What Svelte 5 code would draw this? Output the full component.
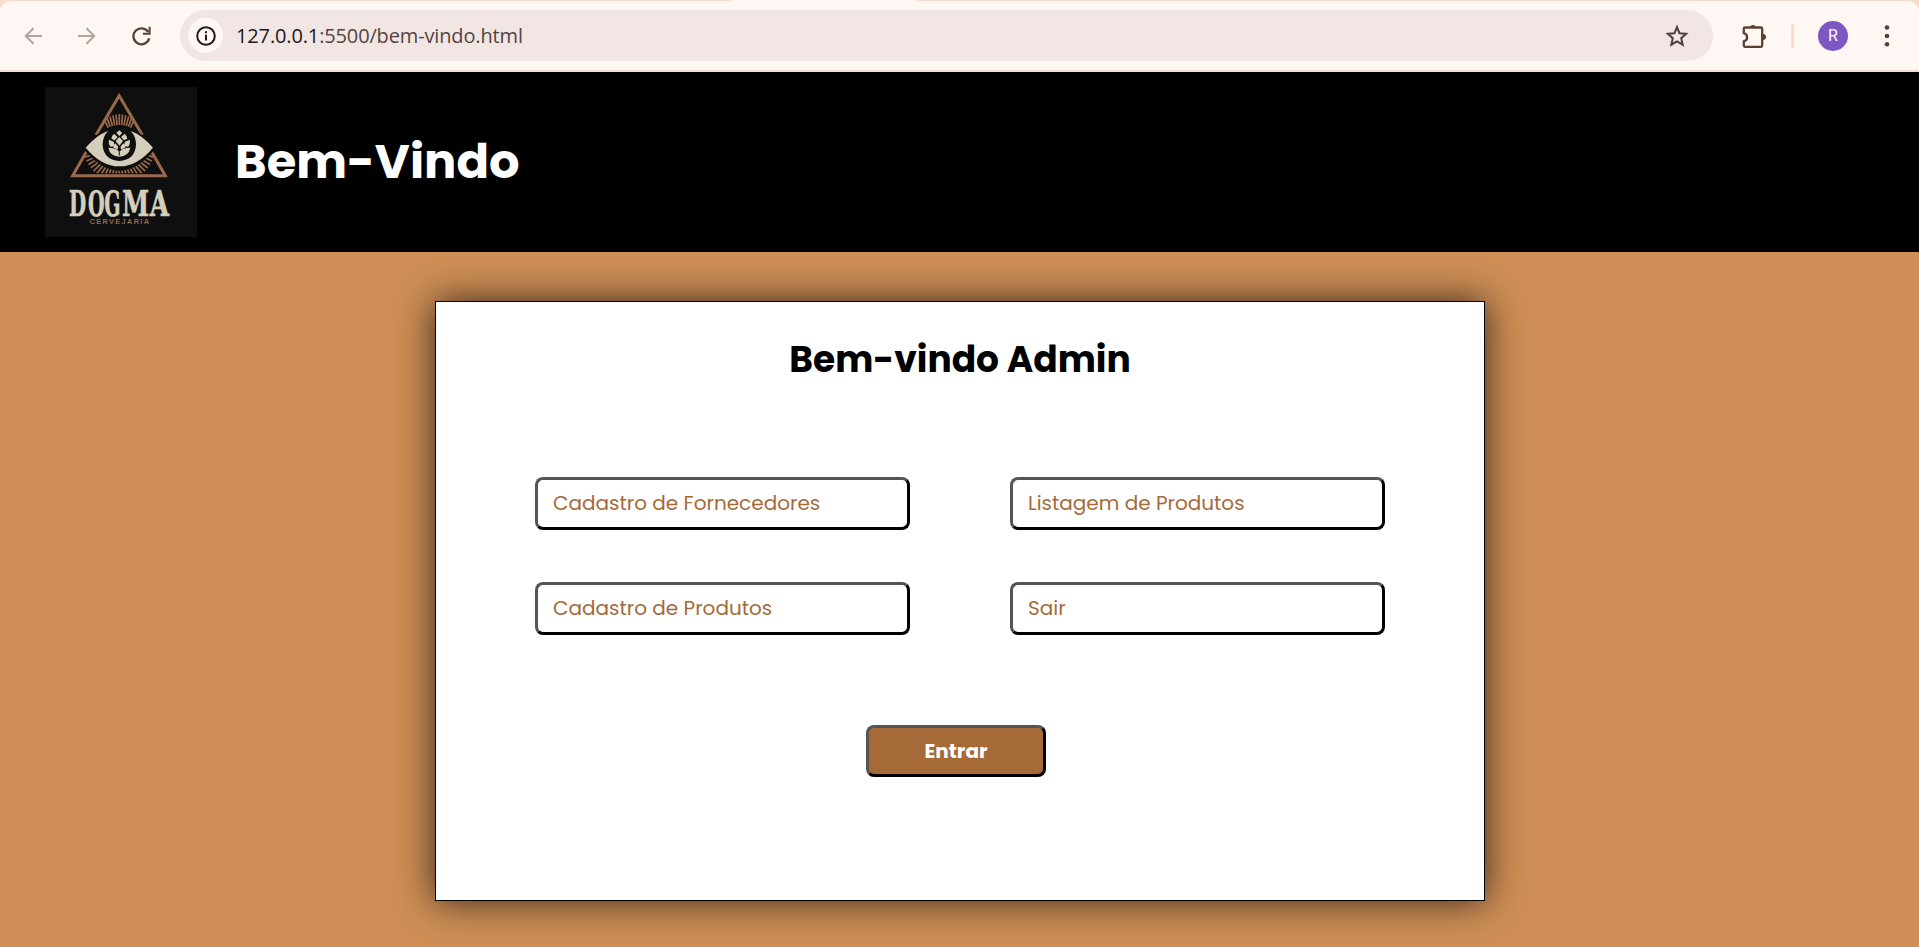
<script>
  const links = ['Cadastro de Fornecedores', 'Listagem de Produtos', 'Cadastro de Produtos', 'Sair'];

  // Rays that surround the eye, as line segments between two radii
  const ray = (deg, cx, cy, r1, r2) => {
    const a = (deg * Math.PI) / 180;
    return {
      x1: cx + Math.cos(a) * r1,
      y1: cy + Math.sin(a) * r1,
      x2: cx + Math.cos(a) * r2,
      y2: cy + Math.sin(a) * r2
    };
  };
  const lower = Array.from({ length: 23 }, (_, i) => {
    const d = 18 + i * 6.55;
    const edge = Math.abs(Math.sin((d * Math.PI) / 180));
    return ray(d, 238, 197, 74 + 18 * (1 - edge), Math.min(108, 82 / edge));
  });
  const upper = Array.from({ length: 11 }, (_, i) => {
    const d = 244 + i * 5.2;
    return ray(d, 238, 210, 76, 109 - Math.abs(i - 5) * 1.2);
  });
</script>

<div class="browser">
  <div class="tabstrip"><span class="tab"></span></div>
  <div class="toolbar">
    <svg class="arrow back" viewBox="0 0 18 18"><path d="M18 9H2M9.500 1.200 1.700 9l7.800 7.800" /></svg>
    <svg class="arrow fwd" viewBox="0 0 18 18"><path d="M0 9h16M8.500 1.200 16.300 9l-7.800 7.800" /></svg>
    <svg class="reload" viewBox="0 0 19 20"><path d="M16.200 6A8 8 0 1 0 17.200 12.300" /><path class="fill" d="M16.600.8h2v8H11V6.700h5.600z" /></svg>
    <div class="address">
      <span class="site">
        <svg viewBox="0 0 20 20"><circle cx="10" cy="10" r="8.800" /><path d="M10 8.800v5.700M10 5.300v2" /></svg>
      </span>
      <span class="url"><b>127.0.0.1</b>:5500/bem-vindo.html</span>
      <svg class="star" viewBox="0 0 24 24"><path d="M12 3.200 14.500 9.200 21.200 9.800 16.200 14.200 17.700 20.700 12 17.300 6.300 20.700 7.800 14.200 2.800 9.800 9.500 9.200Z" /></svg>
    </div>
    <svg class="puzzle" viewBox="0 0 26 26">
      <path d="M4 4.500H20a1.200 1.200 0 0 1 1.200 1.200V22.600a1.200 1.200 0 0 1-1.200 1.200H4a1.200 1.200 0 0 1-1.200-1.200V18.300a4.200 4.200 0 0 0 0-8.200V5.700A1.200 1.200 0 0 1 4 4.500Z" />
      <path class="fill" d="M9 4a3.200 3.200 0 0 1 6 0zM22 11a3 3 0 0 1 0 6z" />
    </svg>
    <span class="divider"></span>
    <span class="avatar">R</span>
    <svg class="dots" viewBox="0 0 6 24"><circle cx="3" cy="3.500" r="2.300" /><circle cx="3" cy="12" r="2.300" /><circle cx="3" cy="20.300" r="2.300" /></svg>
  </div>
</div>

<header>
  <svg class="logo" viewBox="15 20 456 450">
    <rect x="15" y="20" width="456" height="450" fill="#0f0f0f" />
    <g fill="none" stroke="#99694d" stroke-width="9">
      <path d="M168 164 237.500 46 307 164M140 213 98 286.500H376L334 213" />
    </g>
    <g stroke="#99694d" stroke-width="5">
      {#each upper as r}<line x1={r.x1} y1={r.y1} x2={r.x2} y2={r.y2} />{/each}
      {#each lower as r}<line x1={r.x1} y1={r.y1} x2={r.x2} y2={r.y2} />{/each}
    </g>
    <path d="M128 202Q180 142 238 138Q296 142 348 202Q300 266 238 268Q176 266 128 202Z" fill="#0f0f0f" />
    <path d="M137 202Q170 164 204 152Q188 168 188 193Q190 238 238 242Q286 238 288 193Q288 168 272 152Q306 164 339 202Q292 258 238 258Q184 258 137 202Z" fill="#d4cebb" />
    <g fill="#d4cebb">
      <path d="M238 150 247 158 238 167 229 158Z" />
      <path d="M222 160 233 170 224 180 214 175Q215 166 222 160ZM254 160 243 170 252 180 262 175Q261 166 254 160Z" />
      <path d="M238 170 249 182 238 196 227 182Z" />
      <path d="M207 178 221 184 225 197 212 199Q204 192 207 178ZM269 178 255 184 251 197 264 199Q272 192 269 178Z" />
      <path d="M226 189 235 200 232 208 219 201ZM250 189 241 200 244 208 257 201Z" />
      <path d="M205 202Q228 202 238 214Q248 202 271 202Q266 228 238 229Q210 228 205 202Z" />
    </g>
    <path d="M238 226V214Q239 208 244 206" fill="none" stroke="#0f0f0f" stroke-width="3" />
    <g class="brand">
      <text transform="translate(87 408) scale(.55 1)">D</text>
      <text transform="translate(144 408) scale(.53 1)">O</text>
      <text transform="translate(193 408) scale(.53 1)">G</text>
      <text transform="translate(246 408) scale(.68 1)">M</text>
      <text transform="translate(329 408) scale(.69 1)">A</text>
    </g>
    <text class="sub" x="149" y="431" textLength="178">CERVEJARIA</text>
  </svg>
  <h1>Bem-Vindo</h1>
</header>

<main>
  <section class="card">
    <h2>Bem-vindo Admin</h2>
    <div class="grid">
      {#each links as link}
        <div class="field">{link}</div>
      {/each}
    </div>
    <button>Entrar</button>
  </section>
</main>

<style>
  :global(body) {
    margin: 0;
    background: #ce8e56;
    overflow: hidden;
  }
  .browser {
    height: 72px;
    box-sizing: border-box;
    background: #f8dace;
    border-bottom: 2px solid #f3dcd0;
    font-family: 'Open Sans', sans-serif;
  }
  .tabstrip {
    height: 1px;
    display: flex;
  }
  .tab {
    margin-left: 732px;
    width: 185px;
    background: #fff7f4;
  }
  .toolbar {
    height: 69px;
    box-sizing: border-box;
    display: flex;
    align-items: center;
    background: #fff7f4;
    border-radius: 11px 11px 0 0;
    padding-left: 24px;
  }
  svg {
    display: block;
    flex: none;
  }
  .arrow {
    width: 18px;
    height: 18px;
    fill: none;
    stroke: #b3a39f;
    stroke-width: 2;
  }
  .fwd {
    margin-left: 36px;
  }
  .reload {
    width: 19px;
    height: 20px;
    margin-left: 36px;
    fill: none;
    stroke: #5b4032;
    stroke-width: 2.300;
  }
  .fill {
    fill: #5b4032;
    stroke: none;
  }
  .address {
    width: 1533px;
    height: 51px;
    flex: none;
    margin-left: 29px;
    border-radius: 26px;
    background: #f1e6e3;
    display: flex;
    align-items: center;
    box-sizing: border-box;
    padding: 0 24px 0 8px;
  }
  .site {
    width: 35px;
    height: 35px;
    border-radius: 50%;
    background: #fff7f4;
    display: grid;
    place-items: center;
  }
  .site svg {
    width: 20px;
    height: 20px;
    fill: none;
    stroke: #211a18;
    stroke-width: 2;
  }
  .url {
    margin-left: 13px;
    font-size: 20px;
    line-height: 28px;
    letter-spacing: -0.14px;
    color: #534440;
  }
  .url b {
    font-weight: 400;
    color: #211a18;
  }
  .star {
    width: 24px;
    height: 24px;
    margin-left: auto;
    fill: none;
    stroke: #4c403c;
    stroke-width: 2;
  }
  .puzzle {
    width: 26px;
    height: 26px;
    margin-left: 28px;
    fill: none;
    stroke: #5b4032;
    stroke-width: 2.300;
  }
  .divider {
    width: 3px;
    height: 24px;
    margin-left: 24px;
    border-radius: 2px;
    background: #fedbc9;
  }
  .avatar {
    width: 30px;
    height: 30px;
    margin-left: 24px;
    border-radius: 50%;
    background: #7e57c2;
    color: #fff;
    font: 16px/30px Roboto, sans-serif;
    text-align: center;
  }
  .dots {
    width: 6px;
    height: 24px;
    margin-left: 36px;
    fill: #5b4032;
  }
  header {
    height: 180px;
    background: #000;
    display: flex;
    align-items: center;
    padding-left: 45px;
  }
  .logo {
    width: 152px;
    height: 150px;
  }
  .brand {
    font: bold 108px 'DejaVu Serif', serif;
    fill: #d4cebb;
    stroke: #d4cebb;
    stroke-width: 2;
  }
  .sub {
    font: bold 22px 'Liberation Sans', sans-serif;
    fill: #99694d;
  }
  h1,
  h2,
  .field,
  button {
    font-family: Poppins, Inter, sans-serif;
    white-space: nowrap;
  }
  h1 {
    margin: 0 0 0 38px;
    font-size: 48px;
    line-height: 62px;
    font-weight: 700;
    color: #fff;
  }
  main {
    height: 695px;
    box-sizing: border-box;
    padding-top: 49px;
    background: #ce8e56;
  }
  .card {
    width: 1050px;
    height: 600px;
    box-sizing: border-box;
    margin-left: 435px;
    border: 1px solid #000;
    background: #fff;
    box-shadow: 0 0 35px rgba(0, 0, 0, 0.74);
    display: flex;
    flex-direction: column;
    align-items: center;
    padding-top: 33px;
  }
  h2 {
    margin: 0;
    font-size: 36px;
    line-height: 50px;
    font-weight: 700;
    color: #000;
  }
  .grid {
    display: grid;
    grid-template-columns: 375px 375px;
    gap: 52px 100px;
    margin-top: 92px;
  }
  .field {
    height: 53px;
    box-sizing: border-box;
    border: 3px solid;
    border-color: #555 #000 #000 #555;
    border-radius: 8px;
    padding-left: 15px;
    font-size: 20px;
    line-height: 47px;
    color: #a56a3a;
  }
  button {
    width: 180px;
    height: 52px;
    margin: 90px 8px 0 0;
    padding: 0;
    border: 3px solid;
    border-color: #555 #000 #000 #555;
    border-radius: 8px;
    background: #a66a38;
    color: #fff;
    font-size: 20px;
    font-weight: 700;
  }
</style>
